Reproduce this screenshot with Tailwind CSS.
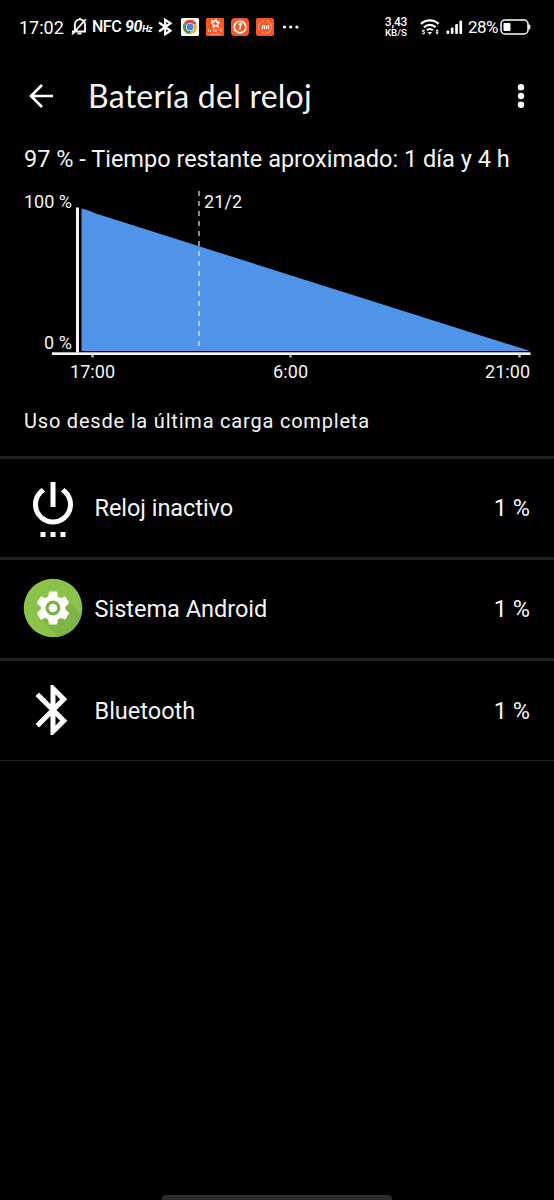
<!DOCTYPE html>
<html lang="es">
<head>
<meta charset="utf-8">
<title>Batería del reloj</title>
<script src="https://cdn.jsdelivr.net/npm/@tailwindcss/browser@4"></script>
</head>
<body class="bg-black">
<div class="flex h-[1200px] w-[554px] flex-col overflow-hidden bg-black font-['Roboto',sans-serif] text-[#f5f5f5]">
  <!-- Status bar -->
  <div class="flex h-[54px] items-center whitespace-nowrap text-white">
    <span class="ml-[19px] w-[52px] text-[18px]">17:02</span>
    <svg class="h-[20px] w-[18px] shrink-0" viewBox="1 0 18 20" fill="none" stroke="#fff" stroke-width="1.8"><path d="M2 14.500H15V7.500A4.900 4.900 0 0 0 4.900 7.500V14.500M7.500 16.600h4M9.900 .8v2M2 17.500 15.800 2.300"/></svg>
    <span class="ml-[3px] w-[33px] text-[16px] font-medium tracking-[-0.5px]">NFC</span>
    <span class="w-[33px] text-[16px] font-bold italic tracking-[-0.3px]">90<span class="text-[9px]">Hz</span></span>
    <svg class="h-[20px] w-[15px] shrink-0" viewBox="0 0 15 20" fill="none" stroke="#fff" stroke-width="2.2"><path d="M1 5.500 12.500 13.800 7.200 17.200V2.800L12.500 6.200 1 14.500"/></svg>
    <svg class="ml-[8px] h-[18px] w-[94px] shrink-0" viewBox="0 0 94 18">
      <rect width="18" height="18" rx="1.500" fill="#fff"/>
      <circle cx="9" cy="9" r="7" fill="#e2b23b"/><path d="M9 9 3 5.200A7 7 0 0 1 15.400 6H9Z" fill="#d84a3b"/><path d="M9 9 2.900 5.300A7 7 0 0 0 8 15.900L11 11Z" fill="#3f9b55"/><circle cx="9" cy="9" r="4.100" fill="#fff"/><circle cx="9" cy="9" r="3.400" fill="#4285f4"/>
      <rect x="25" width="18" height="18" rx="1" fill="#fb5526"/><path d="M31 2.500l2 1.500 2-2.500 1 2.500 2 .5-1.500 2 .5 2-2.500-1-2 1.500v-2.500l-2-1.500Z" fill="none" stroke="#fff" stroke-width="1.500"/><path d="M27.500 11v3m2-2v2m2-2.500h1.500v2.500m2-3.500v3.500m2-2h1m2-1.500v3.500" stroke="#ffd2c0" stroke-width="1" fill="none"/><path d="M29 16.300h11" stroke="#ffa98b" stroke-width="1" stroke-dasharray="2 .7"/>
      <rect x="50" width="18" height="18" rx="4" fill="#fb5526"/><circle cx="59" cy="9" r="5.800" fill="none" stroke="#fff" stroke-width="1.800"/><path d="M57.500 6.500 60 5.500 58.500 12" fill="none" stroke="#fff" stroke-width="1.600"/>
      <rect x="75" width="18" height="18" rx="2" fill="#fb5526"/><circle cx="84" cy="9" r="6.500" fill="none" stroke="#ffa286" stroke-width="1" stroke-dasharray="13 3"/><path d="M81.500 11V7.500h2V11M85.500 7.500V11M87.500 7v4" fill="none" stroke="#fff" stroke-width="1.200"/>
    </svg>
    <svg class="ml-[7px] h-[6px] w-[18px] shrink-0" viewBox="0 0 18 6" fill="#fff"><circle cx="2.500" cy="3" r="1.600"/><circle cx="8.700" cy="3" r="1.600"/><circle cx="14.900" cy="3" r="1.600"/></svg>
    <span class="ml-[84px] flex w-[24px] flex-col items-center font-medium"><span class="text-[12px] leading-[12px] tracking-[-0.2px]">3,43</span><span class="text-[9.800px] leading-[10px]">KB/S</span></span>
    <svg class="ml-[12px] h-[18px] w-[20px] shrink-0" viewBox="0 0 20 18" fill="none" stroke="#fff" stroke-width="2.200"><path d="M1 5.900a12.500 12.500 0 0 1 17.600 0M4 9.200a8.300 8.300 0 0 1 11.600 0M6.800 12.200a4.300 4.300 0 0 1 6 0"/><path d="M7.500 14h4.700L9.850 16.800Z" fill="#fff" stroke="none"/><path d="M4.800 12.300H2.600v1.500h1.700v2H2.200" stroke-width="1"/><path d="M15.400 13.500 17.100 11l1.700 2.500ZM15.400 14.300l1.700 2.500 1.700-2.500Z" fill="#fff" stroke="none"/></svg>
    <svg class="ml-[6px] h-[14px] w-[17px] shrink-0" viewBox="0 0 17 14" fill="#fff"><rect x="0.500" y="10.500" width="2.700" height="3.500" rx="1"/><rect x="4.800" y="7.500" width="2.700" height="6.500" rx="1"/><rect x="9.200" y="4" width="2.700" height="10" rx="1"/><rect x="13.400" y="0.500" width="2.700" height="13.500" rx="1"/></svg>
    <span class="ml-[5px] w-[32px] pt-px text-[17px] tracking-[-0.5px]">28%</span>
    <svg class="h-[16px] w-[31px] shrink-0" viewBox="0 0 31 16"><rect x="1" y="1" width="27" height="14" rx="4" fill="none" stroke="#fff" stroke-width="1.500"/><rect x="3.500" y="4" width="7" height="8" rx="1" fill="#fff"/><rect x="28.500" y="5.500" width="1.800" height="5" rx="0.900" fill="#fff"/></svg>
  </div>

  <!-- App bar -->
  <header class="flex h-[84px] items-center">
    <svg class="ml-[28px] h-[26px] w-[26px] shrink-0" viewBox="0 0 26 26" fill="none" stroke="#fff" stroke-width="2.700"><path d="M25 13H3.500M14 2 3 13l11 11"/></svg>
    <h1 class="ml-[34px] font-['Lato',sans-serif] text-[32px] leading-[40px] tracking-[0.250px] whitespace-nowrap">Batería del reloj</h1>
    <svg class="mr-[29px] ml-auto h-[26px] w-[8px] shrink-0" viewBox="0 0 8 26" fill="#fff"><circle cx="4" cy="4.200" r="3.200"/><circle cx="4" cy="13" r="3.200"/><circle cx="4" cy="21.800" r="3.200"/></svg>
  </header>

  <p class="ml-[24px] h-[42px] text-[23.500px] leading-[42px] whitespace-nowrap">97 % - Tiempo restante aproximado: 1 día y 4 h</p>

  <!-- Charge forecast, from y = 180 -->
  <svg class="h-[216px] w-[554px] shrink-0" viewBox="0 180 554 216" font-family="Roboto, sans-serif" font-size="18" fill="#f5f5f5">
    <path d="M81.500 208.500 90 211 95 213.300 530 351H81.500Z" fill="#5094ea"/>
    <path d="M199 191V351" stroke="#fff" stroke-opacity=".65" stroke-width="1.700" stroke-dasharray="5 5"/>
    <rect x="76" y="207.500" width="3" height="145"/>
    <rect x="52" y="352.300" width="478.500" height="2.700"/>
    <path d="M92.500 355v2.500M290.500 355v2.500M519.500 355v2.500" stroke="#aaa" stroke-width="2.500"/>
    <text x="24" y="208" textLength="48">100 %</text>
    <text x="44" y="349" textLength="28">0 %</text>
    <text x="204" y="208" textLength="38">21/2</text>
    <text x="70" y="378" textLength="45">17:00</text>
    <text x="273" y="378" textLength="35">6:00</text>
    <text x="485" y="378" textLength="45">21:00</text>
  </svg>

  <h2 class="ml-[24px] h-[50px] text-[20px] leading-[50px] tracking-[0.800px] whitespace-nowrap">Uso desde la última carga completa</h2>

  <!-- Usage list -->
  <ul class="mt-[9.500px] text-[23.500px]">
    <li class="flex h-[101.300px] items-center border-t-[3px] border-[#202020] pr-[24px] pl-[23px]">
      <svg class="mb-[2px] h-[60px] w-[60px] shrink-0" viewBox="0 0 24 24" fill="#fff"><path d="M7 24h2v-2H7v2zm4 0h2v-2h-2v2zm2-22h-2v10h2V2zm3.560 2.440l-1.450 1.450C16.840 6.940 18 8.830 18 11c0 3.310-2.690 6-6 6s-6-2.690-6-6c0-2.170 1.160-4.060 2.880-5.120L7.440 4.440C5.360 5.880 4 8.280 4 11c0 4.420 3.580 8 8 8s8-3.580 8-8c0-2.720-1.360-5.120-3.440-6.560zM15 24h2v-2h-2v2z"/></svg>
      <span class="ml-[11.500px] pt-[2px] tracking-[-0.050px]">Reloj inactivo</span><span class="ml-auto pt-[2px]">1 %</span>
    </li>
    <li class="flex h-[101.300px] items-center border-t-[3px] border-[#202020] pr-[24px] pl-[23px]">
      <svg class="mb-px h-[60px] w-[60px] shrink-0" viewBox="0 0 60 60">
        <defs><clipPath id="disc"><circle cx="30" cy="30" r="29.300"/></clipPath></defs>
        <circle cx="30" cy="30" r="29.300" fill="#8bc34a"/>
        <path d="M19 42 44 22 62 40V62H38Z" fill="#7fb546" clip-path="url(#disc)"/>
        <circle cx="30" cy="30" r="8.500" fill="#7cb045"/>
        <path transform="translate(10.200 10.200) scale(1.650)" fill="#fff" fill-rule="evenodd" d="M19.430 12.980c.04-.32.07-.64.07-.98s-.03-.66-.07-.98l2.110-1.650c.19-.15.24-.42.12-.64l-2-3.460c-.12-.22-.39-.3-.61-.22l-2.490 1c-.52-.4-1.080-.73-1.690-.98l-.38-2.650C14.460 2.180 14.250 2 14 2h-4c-.25 0-.46.18-.49.42l-.38 2.650c-.61.25-1.170.59-1.690.98l-2.490-1c-.23-.09-.49 0-.61.22l-2 3.460c-.13.22-.07.49.12.64l2.110 1.650c-.04.32-.07.65-.07.98s.03.66.07.98l-2.110 1.650c-.19.15-.24.42-.12.64l2 3.460c.12.22.39.3.61.22l2.490-1c.52.4 1.080.73 1.690.98l.38 2.650c.03.24.24.42.49.42h4c.25 0 .46-.18.49-.42l.38-2.650c.61-.25 1.170-.59 1.690-.98l2.490 1c.23.09.49 0 .61-.22l2-3.460c.12-.22.07-.49-.12-.64l-2.110-1.650zM12 16.500a4.500 4.500 0 1 1 0-9 4.500 4.500 0 0 1 0 9z"/>
        <circle cx="30" cy="30" r="4.300" fill="#fff"/>
      </svg>
      <span class="ml-[11.500px] pt-[2px]">Sistema Android</span><span class="ml-auto pt-[2px]">1 %</span>
    </li>
    <li class="flex h-[103px] items-center border-t-[3px] border-b border-[#202020] pr-[24px] pl-[23px]">
      <svg class="mb-[2px] h-[60px] w-[60px] shrink-0" viewBox="0 0 24 24" fill="#fff"><path d="M17.710 7.710L12 2h-1v7.590L6.410 5 5 6.410 10.590 12 5 17.590 6.410 19 11 14.410V22h1l5.710-5.710-4.300-4.290 4.300-4.290zM13 5.830l1.880 1.880L13 9.590V5.830zm1.880 10.460L13 18.170v-3.760l1.880 1.880z"/></svg>
      <span class="ml-[11.500px] pt-[2px]">Bluetooth</span><span class="ml-auto pt-[2px]">1 %</span>
    </li>
  </ul>

  <div class="mt-auto ml-[162px] h-[5px] w-[230px] shrink-0 rounded-t-sm bg-[#2b2b2b]"></div>
</div>
</body>
</html>
